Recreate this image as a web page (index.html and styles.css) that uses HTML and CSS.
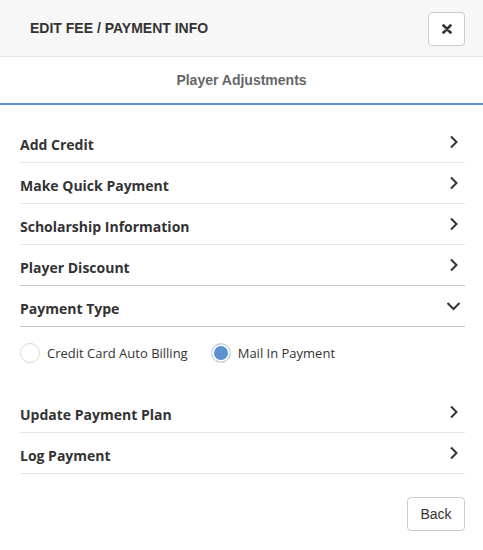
FILE: index.html
```html
<!DOCTYPE html>
<html>
<head>
    <title>Edit Fee / Payment Info</title>
    <link rel="stylesheet" href="styles.css">
</head>
<body>
    <div class="modal">
        <div class="modal-header">
            <h2 class="modal-title">EDIT FEE / PAYMENT INFO</h2>
            <button class="close-button" aria-label="Close">
                <svg width="10" height="10" viewBox="0 0 10 10"><path d="M1.5 1.5 L8.5 8.5 M8.5 1.5 L1.5 8.5" stroke="#333" stroke-width="2.6" stroke-linecap="round"/></svg>
            </button>
        </div>

        <div class="tabs">
            <div class="tab active">Player Adjustments</div>
        </div>

        <div class="modal-body">
            <ul class="menu-list">
                <li class="menu-item">Add Credit <svg class="chevron" width="10" height="14" viewBox="0 0 10 14"><path d="M2 1.5 L7.5 7 L2 12.5" fill="none" stroke="#333" stroke-width="2"/></svg></li>
                <li class="menu-item">Make Quick Payment <svg class="chevron" width="10" height="14" viewBox="0 0 10 14"><path d="M2 1.5 L7.5 7 L2 12.5" fill="none" stroke="#333" stroke-width="2"/></svg></li>
                <li class="menu-item">Scholarship Information <svg class="chevron" width="10" height="14" viewBox="0 0 10 14"><path d="M2 1.5 L7.5 7 L2 12.5" fill="none" stroke="#333" stroke-width="2"/></svg></li>
                <li class="menu-item dark-line">Player Discount <svg class="chevron" width="10" height="14" viewBox="0 0 10 14"><path d="M2 1.5 L7.5 7 L2 12.5" fill="none" stroke="#333" stroke-width="2"/></svg></li>
                <li class="menu-item dark-line open">Payment Type <svg class="chevron-down" width="15" height="10" viewBox="0 0 15 10"><path d="M1.5 2 L7.5 8 L13.5 2" fill="none" stroke="#333" stroke-width="2"/></svg></li>
            </ul>

            <div class="radio-group">
                <label class="radio-option">
                    <span class="radio"></span>
                    Credit Card Auto Billing
                </label>
                <label class="radio-option">
                    <span class="radio checked"></span>
                    Mail In Payment
                </label>
            </div>

            <ul class="menu-list">
                <li class="menu-item">Update Payment Plan <svg class="chevron" width="10" height="14" viewBox="0 0 10 14"><path d="M2 1.5 L7.5 7 L2 12.5" fill="none" stroke="#333" stroke-width="2"/></svg></li>
                <li class="menu-item">Log Payment <svg class="chevron" width="10" height="14" viewBox="0 0 10 14"><path d="M2 1.5 L7.5 7 L2 12.5" fill="none" stroke="#333" stroke-width="2"/></svg></li>
            </ul>

            <div class="modal-footer">
                <button class="back-button">Back</button>
            </div>
        </div>
    </div>
</body>
</html>
```

FILE: styles.css
```css
body {
    margin: 0;
    background: #fff;
    color: #333;
    font-family: "Liberation Sans", Arial, sans-serif;
}

.modal {
    width: 483px;
}

.modal-header {
    display: flex;
    align-items: center;
    justify-content: space-between;
    height: 56px;
    padding: 0 18px 0 30px;
    background: #f7f7f7;
    border-bottom: 1px solid #e6e6e6;
}

.modal-title {
    margin: 0;
    font-size: 14px;
    font-weight: bold;
    color: #333;
}

.close-button {
    display: flex;
    align-items: center;
    justify-content: center;
    width: 37px;
    height: 34px;
    margin-top: 1px;
    padding: 0;
    background: #fff;
    border: 1px solid #ccc;
    border-radius: 4px;
}

.tabs {
    display: flex;
    justify-content: center;
    border-bottom: 2px solid #5b90d1;
}

.tab {
    padding: 15px 0 15px;
    font-size: 14px;
    font-weight: bold;
    color: #666;
    line-height: 16px;
}

.modal-body {
    padding: 17px 18px 0 20px;
}

.menu-list {
    list-style: none;
    margin: 0;
    padding: 0;
}

.menu-item {
    display: flex;
    align-items: center;
    justify-content: space-between;
    padding: 13px 0 7px;
    line-height: 20px;
    font-family: "Open Sans", sans-serif;
    font-size: 14px;
    font-weight: bold;
    border-bottom: 1px solid #e6e6e6;
}

.menu-item.dark-line {
    border-bottom-color: #c8c8c8;
}

.chevron {
    margin-right: 6px;
    margin-top: -6px;
}

.chevron-down {
    margin-right: 4px;
    margin-top: -7px;
}

.radio-group {
    display: flex;
    gap: 23px;
    padding: 16px 0 29px;
}

.radio-option {
    display: flex;
    align-items: center;
    gap: 7px;
    font-family: "Open Sans", sans-serif;
    font-size: 13px;
    line-height: 20px;
}

.radio {
    box-sizing: border-box;
    width: 20px;
    height: 20px;
    border: 1px solid #d9d9d9;
    border-radius: 50%;
    background: #fff;
}

.radio.checked {
    background: #5b90d1;
    box-shadow: inset 0 0 0 2px #fff;
}

.modal-footer {
    display: flex;
    justify-content: flex-end;
    padding-top: 23px;
}

.back-button {
    width: 58px;
    height: 34px;
    background: #fff;
    border: 1px solid #ccc;
    border-radius: 4px;
    font-family: "Liberation Sans", Arial, sans-serif;
    font-size: 14px;
    color: #333;
}
```
